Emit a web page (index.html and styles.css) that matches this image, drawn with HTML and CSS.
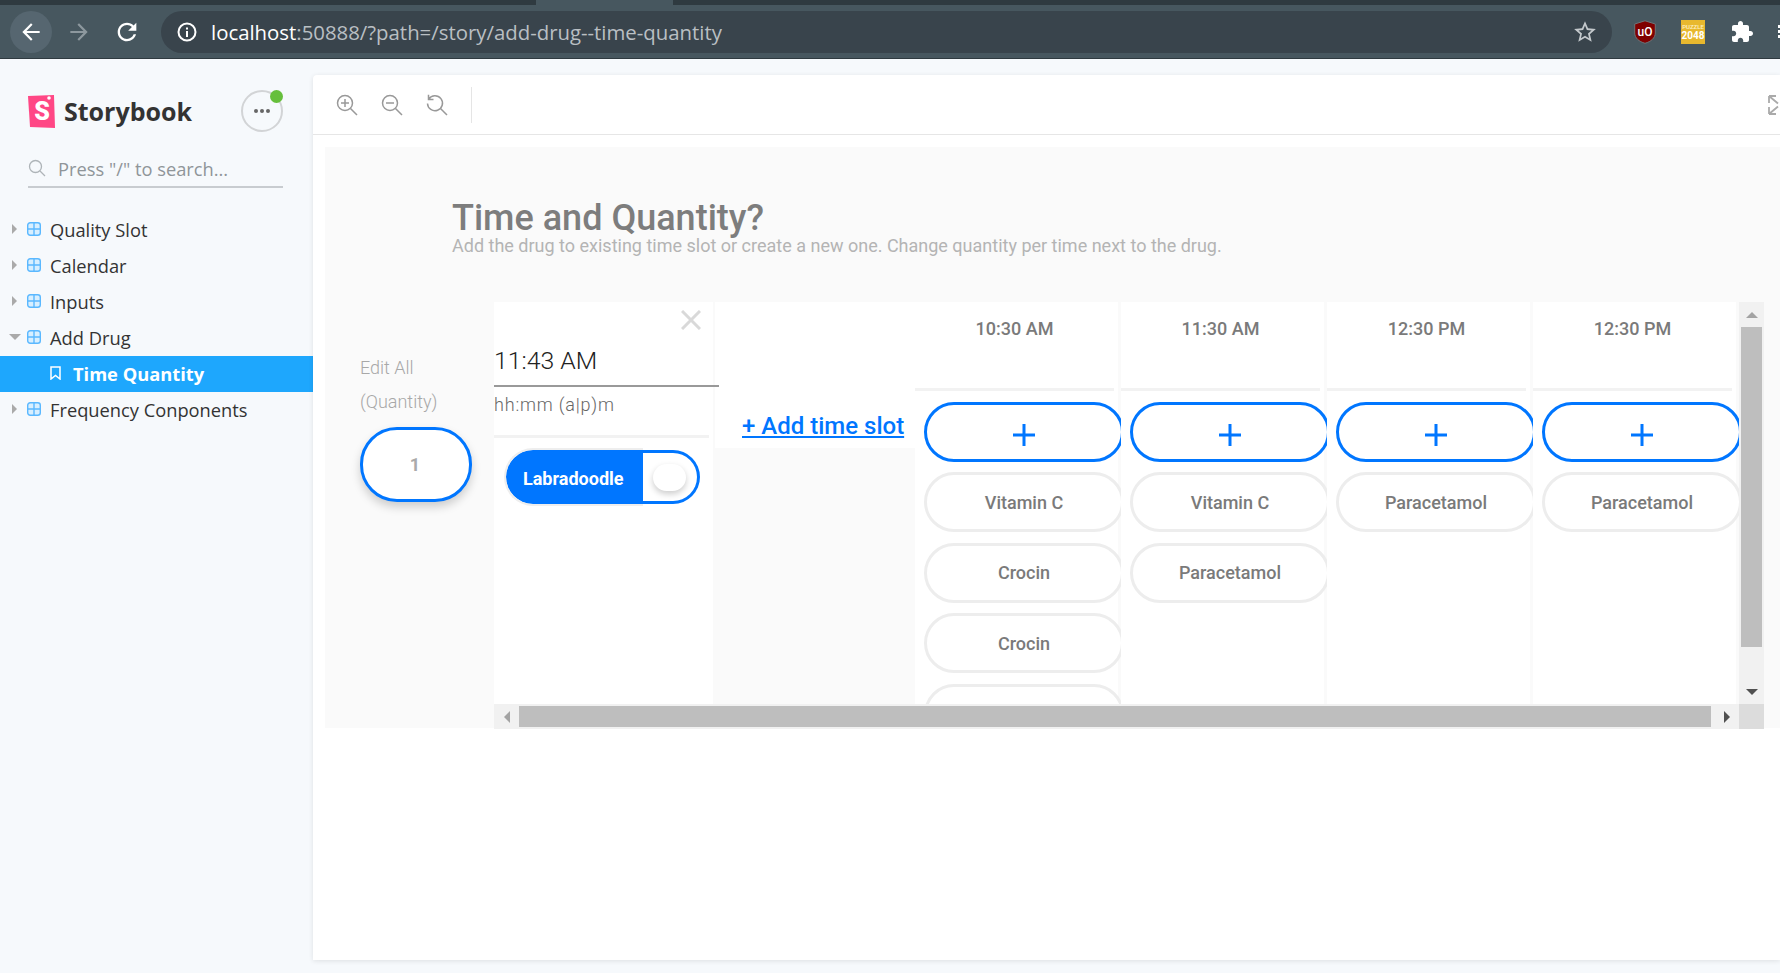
FILE: index.html
```html
<!DOCTYPE html>
<html>
<head>
    <title>Storybook</title>
    <meta charset="UTF-8"/>
    <link rel="stylesheet" href="styles.css">
</head>
<body>
    <div class="tabstrip"><div class="tab"></div></div>
    <div class="toolbar">
        <div class="nav nav-hover">
            <svg width="26" height="26" viewBox="0 0 24 24"><path fill="#fff" d="M20 11H7.83l5.59-5.59L12 4l-8 8 8 8 1.41-1.41L7.83 13H20v-2z"/></svg>
        </div>
        <div class="nav nav-forward">
            <svg width="26" height="26" viewBox="0 0 24 24"><path fill="#8d989e" d="M4 11h12.17l-5.59-5.59L12 4l8 8-8 8-1.41-1.41L16.17 13H4v-2z"/></svg>
        </div>
        <div class="nav nav-reload">
            <svg width="28" height="28" viewBox="0 0 24 24"><path fill="#fff" d="M17.65 6.35C16.2 4.9 14.21 4 12 4c-4.42 0-7.99 3.58-7.99 8s3.57 8 7.99 8c3.73 0 6.84-2.55 7.73-6h-2.08c-.82 2.33-3.04 4-5.65 4-3.31 0-6-2.69-6-6s2.69-6 6-6c1.66 0 3.14.69 4.22 1.78L13 11h7V4l-2.35 2.35z"/></svg>
        </div>
        <div class="address">
            <svg class="info" width="20" height="20" viewBox="0 0 20 20"><circle cx="10" cy="10" r="8.5" fill="none" stroke="#fff" stroke-width="2"/><rect x="9" y="9" width="2" height="6" fill="#fff"/><rect x="9" y="5.5" width="2" height="2" fill="#fff"/></svg>
            <span class="url"><span class="url-host">localhost</span>:50888/?path=/story/add-drug--time-quantity</span>
            <svg class="star" width="26" height="26" viewBox="0 0 24 24"><path fill="#c4c9cc" d="M22 9.24l-7.19-.62L12 2 9.19 8.63 2 9.24l5.46 4.73L5.82 21 12 17.27 18.18 21l-1.63-7.03L22 9.24zM12 15.4l-3.76 2.27 1-4.28-3.32-2.88 4.38-.38L12 6.1l1.71 4.04 4.38.38-3.32 2.88 1 4.28L12 15.4z"/></svg>
        </div>
        <svg class="ext-ublock" width="22" height="24" viewBox="0 0 22 24"><path fill="#800000" stroke="#6d7478" stroke-width="1" d="M11 .8 21.3 4v9c0 5-4.300 8.600-10.300 10.300C5 21.600.7 18 .7 13V4z"/><text x="11" y="15.500" text-anchor="middle" class="ublock-text">uO</text></svg>
        <div class="ext-puzzle"><span class="puzzle-word">PUZZLE</span><span class="puzzle-num">2048</span></div>
        <svg class="ext-plugin" width="24" height="24" viewBox="0 0 24 24"><path fill="#fff" d="M20.500 11H19V7c0-1.100-.9-2-2-2h-4V3.500C13 2.120 11.880 1 10.500 1S8 2.120 8 3.500V5H4c-1.100 0-1.990.9-1.990 2v3.800H3.500c1.490 0 2.700 1.210 2.700 2.700s-1.210 2.700-2.700 2.700H2V20c0 1.100.9 2 2 2h3.800v-1.500c0-1.490 1.210-2.700 2.700-2.700 1.490 0 2.700 1.210 2.700 2.700V22H17c1.100 0 2-.9 2-2v-4h1.500c1.380 0 2.500-1.120 2.500-2.500S21.880 11 20.500 11z"/></svg>
        <div class="ext-menu"><i></i><i></i><i></i></div>
    </div>

    <div class="app">
        <div class="sidebar">
            <div class="brand">
                <svg class="logo" width="27" height="33" viewBox="0 0 27 33">
                    <path fill="#ff4785" d="M0 1 26 0l1 33-25-1z"/>
                    <circle cx="21" cy="3" r="1.800" fill="#fff"/>
                    <text x="14" y="25" text-anchor="middle" class="logo-s">S</text>
                </svg>
                <span class="brand-name">Storybook</span>
                <div class="brand-menu">
                    <i></i><i></i><i></i>
                    <span class="status-dot"></span>
                </div>
            </div>
            <div class="search">
                <svg width="18" height="18" viewBox="0 0 18 18"><circle cx="7.500" cy="7.500" r="6" fill="none" stroke="#aeb4b8" stroke-width="1.300"/><path d="M12 12l5 5" stroke="#aeb4b8" stroke-width="1.300"/></svg>
                <span>Press "/" to search...</span>
            </div>
            <div class="tree">
                <div class="tree-row"><span class="arrow"><b class="arrow-right"></b></span><svg class="grid-ico" width="14" height="14" viewBox="0 0 14 14"><rect x=".7" y=".7" width="12.600" height="12.600" rx="2.500" fill="#d8effF" stroke="#5ab8ff" stroke-width="1.400"/><path d="M7 1v12M1 7h12" stroke="#5ab8ff" stroke-width="1.400"/></svg><span>Quality Slot</span></div>
                <div class="tree-row"><span class="arrow"><b class="arrow-right"></b></span><svg class="grid-ico" width="14" height="14" viewBox="0 0 14 14"><rect x=".7" y=".7" width="12.600" height="12.600" rx="2.500" fill="#d8effF" stroke="#5ab8ff" stroke-width="1.400"/><path d="M7 1v12M1 7h12" stroke="#5ab8ff" stroke-width="1.400"/></svg><span>Calendar</span></div>
                <div class="tree-row"><span class="arrow"><b class="arrow-right"></b></span><svg class="grid-ico" width="14" height="14" viewBox="0 0 14 14"><rect x=".7" y=".7" width="12.600" height="12.600" rx="2.500" fill="#d8effF" stroke="#5ab8ff" stroke-width="1.400"/><path d="M7 1v12M1 7h12" stroke="#5ab8ff" stroke-width="1.400"/></svg><span>Inputs</span></div>
                <div class="tree-row"><span class="arrow"><b class="arrow-down"></b></span><svg class="grid-ico" width="14" height="14" viewBox="0 0 14 14"><rect x=".7" y=".7" width="12.600" height="12.600" rx="2.500" fill="#d8effF" stroke="#5ab8ff" stroke-width="1.400"/><path d="M7 1v12M1 7h12" stroke="#5ab8ff" stroke-width="1.400"/></svg><span>Add Drug</span></div>
                <div class="tree-row tree-active">
                    <svg width="11" height="14" viewBox="0 0 11 14"><path d="M1 1h9v12L5.500 9.500 1 13z" fill="none" stroke="#fff" stroke-width="1.500"/></svg>
                    <span>Time Quantity</span>
                </div>
                <div class="tree-row"><span class="arrow"><b class="arrow-right"></b></span><svg class="grid-ico" width="14" height="14" viewBox="0 0 14 14"><rect x=".7" y=".7" width="12.600" height="12.600" rx="2.500" fill="#d8effF" stroke="#5ab8ff" stroke-width="1.400"/><path d="M7 1v12M1 7h12" stroke="#5ab8ff" stroke-width="1.400"/></svg><span>Frequency Conponents</span></div>
            </div>
        </div>

        <div class="panel">
            <div class="panel-tools">
                <svg class="tool" width="22" height="22" viewBox="0 0 22 22"><circle cx="9" cy="9" r="7.500" fill="none" stroke="#999" stroke-width="1.500"/><path d="M14.500 14.500 21 21M9 5v8M5 9h8" fill="none" stroke="#999" stroke-width="1.500"/></svg>
                <svg class="tool" width="22" height="22" viewBox="0 0 22 22"><circle cx="9" cy="9" r="7.500" fill="none" stroke="#999" stroke-width="1.500"/><path d="M14.500 14.500 21 21M5 9h8" fill="none" stroke="#999" stroke-width="1.500"/></svg>
                <svg class="tool" width="22" height="22" viewBox="0 0 22 22"><path d="M2.800 5A7.500 7.500 0 1 1 1.500 9.500M14.500 14.500 21 21M2.500 .8v4.700H7.500" fill="none" stroke="#999" stroke-width="1.500"/></svg>
                <div class="tools-sep"></div>
                <svg class="tool-full" width="12" height="20" viewBox="0 0 12 20"><path d="M1 1h7M1 1v7M1 1l9 7.500M1 19h7M1 19v-7M1 19l9-7.500" fill="none" stroke="#aaa" stroke-width="1.800"/></svg>
            </div>
            <div class="canvas">
                <h1 class="title">Time and Quantity?</h1>
                <div class="subtitle">Add the drug to existing time slot or create a new one. Change quantity per time next to the drug.</div>
                <div class="editor">
                    <div class="edit-all">
                        <div class="edit-label">Edit All</div>
                        <div class="edit-label">(Quantity)</div>
                        <div class="qty">1</div>
                    </div>
                    <div class="scroller">
                        <div class="viewport">
                            <div class="time-col">
                                <svg class="close" width="20" height="20" viewBox="0 0 20 20"><path d="M1 1l18 18M19 1 1 19" stroke="#d9d9d9" stroke-width="3"/></svg>
                                <div class="time-input">11:43 AM</div>
                                <div class="time-hint">hh:mm (a|p)m</div>
                                <div class="toggle">
                                    <div class="toggle-label">Labradoodle</div>
                                    <div class="toggle-end"><span class="toggle-knob"></span></div>
                                </div>
                            </div>
                            <div class="add-col"><a class="add-link" href="#">+ Add time slot</a></div>
                            <div class="slot">
                                <div class="slot-head">10:30 AM</div>
                                <button class="pill pill-add"><svg width="22" height="22" viewBox="0 0 22 22"><path d="M11 0v22M0 11h22" stroke="#0076ff" stroke-width="3"/></svg></button>
                                <button class="pill">Vitamin C</button>
                                <button class="pill">Crocin</button>
                                <button class="pill">Crocin</button>
                                <button class="pill"></button>
                            </div>
                            <div class="slot">
                                <div class="slot-head">11:30 AM</div>
                                <button class="pill pill-add"><svg width="22" height="22" viewBox="0 0 22 22"><path d="M11 0v22M0 11h22" stroke="#0076ff" stroke-width="3"/></svg></button>
                                <button class="pill">Vitamin C</button>
                                <button class="pill">Paracetamol</button>
                            </div>
                            <div class="slot">
                                <div class="slot-head">12:30 PM</div>
                                <button class="pill pill-add"><svg width="22" height="22" viewBox="0 0 22 22"><path d="M11 0v22M0 11h22" stroke="#0076ff" stroke-width="3"/></svg></button>
                                <button class="pill">Paracetamol</button>
                            </div>
                            <div class="slot">
                                <div class="slot-head">12:30 PM</div>
                                <button class="pill pill-add"><svg width="22" height="22" viewBox="0 0 22 22"><path d="M11 0v22M0 11h22" stroke="#0076ff" stroke-width="3"/></svg></button>
                                <button class="pill">Paracetamol</button>
                            </div>
                        </div>
                        <div class="vbar">
                            <span class="bar-btn"><b class="tri-up"></b></span>
                            <span class="vbar-thumb"></span>
                            <span class="bar-btn bar-btn-end"><b class="tri-down"></b></span>
                        </div>
                        <div class="hbar">
                            <span class="bar-btn"><b class="tri-left"></b></span>
                            <span class="hbar-thumb"></span>
                            <span class="bar-btn bar-btn-end"><b class="tri-right"></b></span>
                        </div>
                        <div class="corner"></div>
                    </div>
                </div>
            </div>
        </div>
    </div>
</body>
</html>
```
FILE: styles.css
```css
html {
    height: 100%;
}

body {
    height: 973px;
    margin: 0;
    overflow: hidden;
    display: flex;
    flex-direction: column;
    background-color: #f6f9fc;
    font-family: "Roboto", "Liberation Sans", sans-serif;
}

/* browser chrome */
.tabstrip {
    height: 5px;
    background-color: #2f3a40;
    padding-left: 536px;
}

.tab {
    width: 137px;
    height: 5px;
    background-color: #47575f;
}

.toolbar {
    height: 54px;
    box-sizing: border-box;
    border-bottom: 1px solid #2f3a40;
    background-color: #47575f;
    display: flex;
    align-items: center;
    padding: 0 0 0 10px;
}

.nav {
    width: 42px;
    height: 42px;
    border-radius: 50%;
    display: flex;
    align-items: center;
    justify-content: center;
    flex: none;
}

.nav-hover {
    background-color: #566670;
}

.nav-forward,
.nav-reload {
    margin-left: 6px;
}

.address {
    margin-left: 13px;
    width: 1451px;
    height: 42px;
    box-sizing: border-box;
    border-radius: 21px;
    background-color: #39444c;
    display: flex;
    align-items: center;
    padding: 0 14px 0 16px;
    flex: none;
}

.url {
    margin-left: 14px;
    font-family: "Open Sans", sans-serif;
    font-size: 20.380px;
    color: #b9bfc3;
    white-space: nowrap;
}

.url-host {
    color: #fff;
}

.star {
    margin-left: auto;
}

.ext-ublock {
    margin-left: 22px;
    flex: none;
}

.ublock-text {
    font-family: "Roboto", sans-serif;
    font-size: 12px;
    font-weight: 500;
    fill: #fff;
}

.ext-puzzle {
    margin-left: 25px;
    width: 24px;
    height: 24px;
    background-color: #e8b82e;
    color: #fff;
    display: flex;
    flex-direction: column;
    align-items: center;
    justify-content: center;
    flex: none;
    font-family: "Roboto", sans-serif;
}

.puzzle-word {
    font-size: 6px;
    line-height: 8px;
    font-weight: 500;
    color: #fdf0c4;
}

.puzzle-num {
    font-size: 10px;
    line-height: 10px;
    font-weight: 700;
}

.ext-plugin {
    margin-left: 25px;
    flex: none;
}

.ext-menu {
    margin-left: 24px;
    display: flex;
    flex-direction: column;
    gap: 2px;
    flex: none;
}

.ext-menu i {
    display: block;
    width: 4px;
    height: 3px;
    background-color: #fff;
}

/* storybook */
.app {
    flex: 1;
    display: flex;
    min-height: 0;
}

.sidebar {
    width: 313px;
    flex: none;
    color: #333;
    font-family: "Open Sans", sans-serif;
}

.brand {
    display: flex;
    align-items: center;
    margin: 31px 30px 0 28px;
    height: 42px;
}

.brand-name {
    margin-left: 9px;
    font-size: 25px;
    font-weight: 700;
    color: #333;
}

.logo-s {
    font-family: "Roboto", sans-serif;
    font-size: 25px;
    font-weight: 900;
    fill: #fff;
}

.brand-menu {
    position: relative;
    margin-left: auto;
    width: 42px;
    height: 42px;
    box-sizing: border-box;
    border: 2px solid #d2d4d6;
    border-radius: 50%;
    display: flex;
    align-items: center;
    justify-content: center;
    gap: 2px;
}

.brand-menu i {
    width: 4px;
    height: 4px;
    border-radius: 50%;
    background-color: #666;
}

.status-dot {
    position: absolute;
    top: -2px;
    right: -2px;
    width: 13px;
    height: 13px;
    border-radius: 50%;
    background-color: #66bf3c;
}

.search {
    margin: 20px 30px 0 28px;
    height: 32px;
    padding-bottom: 2px;
    border-bottom: 2px solid #c8ccd0;
    display: flex;
    align-items: center;
    gap: 12px;
    color: #8f9599;
    font-size: 18.300px;
}

.tree {
    margin-top: 24px;
    font-size: 18.300px;
}

.tree-row {
    height: 36px;
    box-sizing: border-box;
    padding-bottom: 2px;
    display: flex;
    align-items: center;
    padding-left: 7px;
}

.arrow {
    width: 15px;
    margin-right: 5px;
    display: flex;
    justify-content: center;
}

.arrow-right {
    border-left: 5px solid #aaa;
    border-top: 5px solid transparent;
    border-bottom: 5px solid transparent;
}

.arrow-down {
    border-top: 6px solid #aaa;
    border-left: 6px solid transparent;
    border-right: 6px solid transparent;
}

.grid-ico {
    margin-right: 9px;
    flex: none;
}

.tree-active {
    padding-left: 50px;
    background-color: #1ea7fd;
    color: #fff;
    font-weight: 700;
    gap: 12px;
}

.panel {
    flex: 1;
    margin-top: 16px;
    height: 885px;
    background-color: #fff;
    border-top-left-radius: 4px;
    box-shadow: 0 1px 5px rgba(0, 0, 0, 0.1);
    overflow: hidden;
}

.panel-tools {
    height: 59px;
    border-bottom: 1px solid #e6e6e6;
    display: flex;
    align-items: center;
    padding-left: 23px;
}

.tool {
    margin-right: 23px;
}

.tools-sep {
    width: 1px;
    height: 36px;
    background-color: #e5e5e5;
}

.tool-full {
    margin-left: auto;
}

.canvas {
    margin: 12px 0 0 12px;
    height: 581px;
    box-sizing: border-box;
    background-color: #fafafa;
    padding-top: 53px;
}

.title {
    margin: 0 0 0 127px;
    font-size: 36px;
    line-height: 36px;
    font-weight: 500;
    color: #7d7d7d;
}

.subtitle {
    margin-left: 127px;
    font-size: 18px;
    line-height: 20px;
    font-weight: 400;
    color: #b4b4b4;
}

.editor {
    margin: 46px 0 0 35px;
    display: flex;
}

.edit-all {
    width: 134px;
    flex: none;
    padding-top: 49px;
}

.edit-label {
    font-size: 18px;
    line-height: 34px;
    font-weight: 300;
    color: #a8a8a8;
}

.qty {
    margin-top: 8px;
    width: 112px;
    height: 75px;
    box-sizing: border-box;
    border: 3px solid #0076ff;
    border-radius: 37px;
    background-color: #fff;
    box-shadow: 0 5px 10px rgba(0, 0, 0, 0.18);
    display: flex;
    align-items: center;
    justify-content: center;
    padding-right: 2px;
    font-size: 18px;
    font-weight: 700;
    color: #aaa;
}

.scroller {
    display: grid;
    grid-template-columns: 1245px 25px;
    grid-template-rows: 402px 25px;
}

.viewport {
    display: flex;
    overflow: hidden;
}

.time-col {
    width: 219px;
    flex: none;
    background-color: #fff;
    display: flex;
    flex-direction: column;
}

.close {
    align-self: flex-end;
    margin: 8px 12px 0 0;
}

.time-input {
    position: relative;
    z-index: 1;
    width: 225px;
    flex: none;
    margin-top: 14px;
    padding-bottom: 7px;
    border-bottom: 2px solid #999;
    font-size: 24.800px;
    line-height: 34px;
    font-weight: 300;
    color: #222;
}

.time-hint {
    width: 215px;
    margin-top: 8px;
    height: 40px;
    border-bottom: 3px solid #f2f2f2;
    font-size: 18px;
    line-height: 20px;
    letter-spacing: 0.800px;
    font-weight: 300;
    color: #666;
}

.toggle {
    margin: 10px 0 0 10px;
    width: 196px;
    display: flex;
    align-items: center;
}

.toggle-label {
    width: 139px;
    height: 58px;
    box-sizing: border-box;
    border: 2px solid #eee;
    border-right: 0;
    border-radius: 29px 0 0 29px;
    background-color: #0076ff;
    background-clip: padding-box;
    color: #fff;
    font-size: 18px;
    font-weight: 700;
    display: flex;
    align-items: center;
    padding: 2px 0 0 17px;
}

.toggle-end {
    width: 57px;
    height: 54px;
    box-sizing: border-box;
    border: 3px solid #0076ff;
    border-left: 0;
    border-radius: 0 27px 27px 0;
    display: flex;
    align-items: center;
    padding-left: 10px;
}

.toggle-knob {
    width: 33px;
    height: 27px;
    border-radius: 14px;
    background-color: #fff;
    box-shadow: 0 3px 6px rgba(0, 0, 0, 0.2);
}

.add-col {
    width: 200px;
    height: 146px;
    margin-left: 2px;
    flex: none;
    background-color: #fff;
    display: flex;
    align-items: flex-end;
    padding: 0 0 7px 27px;
    box-sizing: border-box;
}

.add-link {
    font-size: 24px;
    line-height: 30px;
    font-weight: 500;
    color: #0076ff;
    white-space: nowrap;
}

.slot {
    width: 206px;
    flex: none;
    overflow: hidden;
    background: linear-gradient(to right, #fff 203px, #fafafa 203px);
    display: flex;
    flex-direction: column;
    gap: 10.500px;
}

.slot-head {
    width: 199px;
    height: 86px;
    flex: none;
    box-sizing: content-box;
    border-bottom: 3px solid #f2f2f2;
    text-align: center;
    font-size: 18px;
    line-height: 54px;
    font-weight: 500;
    color: #7a7a7a;
}

.pill {
    width: 200px;
    height: 60px;
    flex: none;
    margin: 0 0 0 9px;
    padding: 0;
    box-sizing: border-box;
    border: 3px solid #ededed;
    border-radius: 30px;
    background-color: #fff;
    font-family: "Roboto", sans-serif;
    font-size: 18px;
    font-weight: 500;
    color: #7a7a7a;
}

.pill-add {
    border-color: #0076ff;
    display: flex;
    align-items: center;
    justify-content: center;
    padding: 0;
}

.pill-add svg {
    margin-top: 6px;
}

/* scrollbars */
.vbar,
.hbar {
    background-color: #f1f1f1;
    display: flex;
}

.vbar {
    flex-direction: column;
    align-items: center;
}

.hbar {
    align-items: center;
}

.bar-btn {
    width: 25px;
    height: 25px;
    flex: none;
    display: flex;
    align-items: center;
    justify-content: center;
}

.bar-btn-end {
    margin: auto 0 0 auto;
}

.vbar-thumb {
    width: 21px;
    height: 320px;
    flex: none;
    background-color: #bebebe;
}

.hbar-thumb {
    width: 1192px;
    height: 21px;
    flex: none;
    background-color: #bebebe;
}

.corner {
    background-color: #dcdcdc;
}

.tri-up {
    border-bottom: 6px solid #a3a3a3;
    border-left: 6px solid transparent;
    border-right: 6px solid transparent;
}

.tri-down {
    border-top: 6px solid #505050;
    border-left: 6px solid transparent;
    border-right: 6px solid transparent;
}

.tri-left {
    border-right: 6px solid #a3a3a3;
    border-top: 6px solid transparent;
    border-bottom: 6px solid transparent;
}

.tri-right {
    border-left: 6px solid #505050;
    border-top: 6px solid transparent;
    border-bottom: 6px solid transparent;
}
```
